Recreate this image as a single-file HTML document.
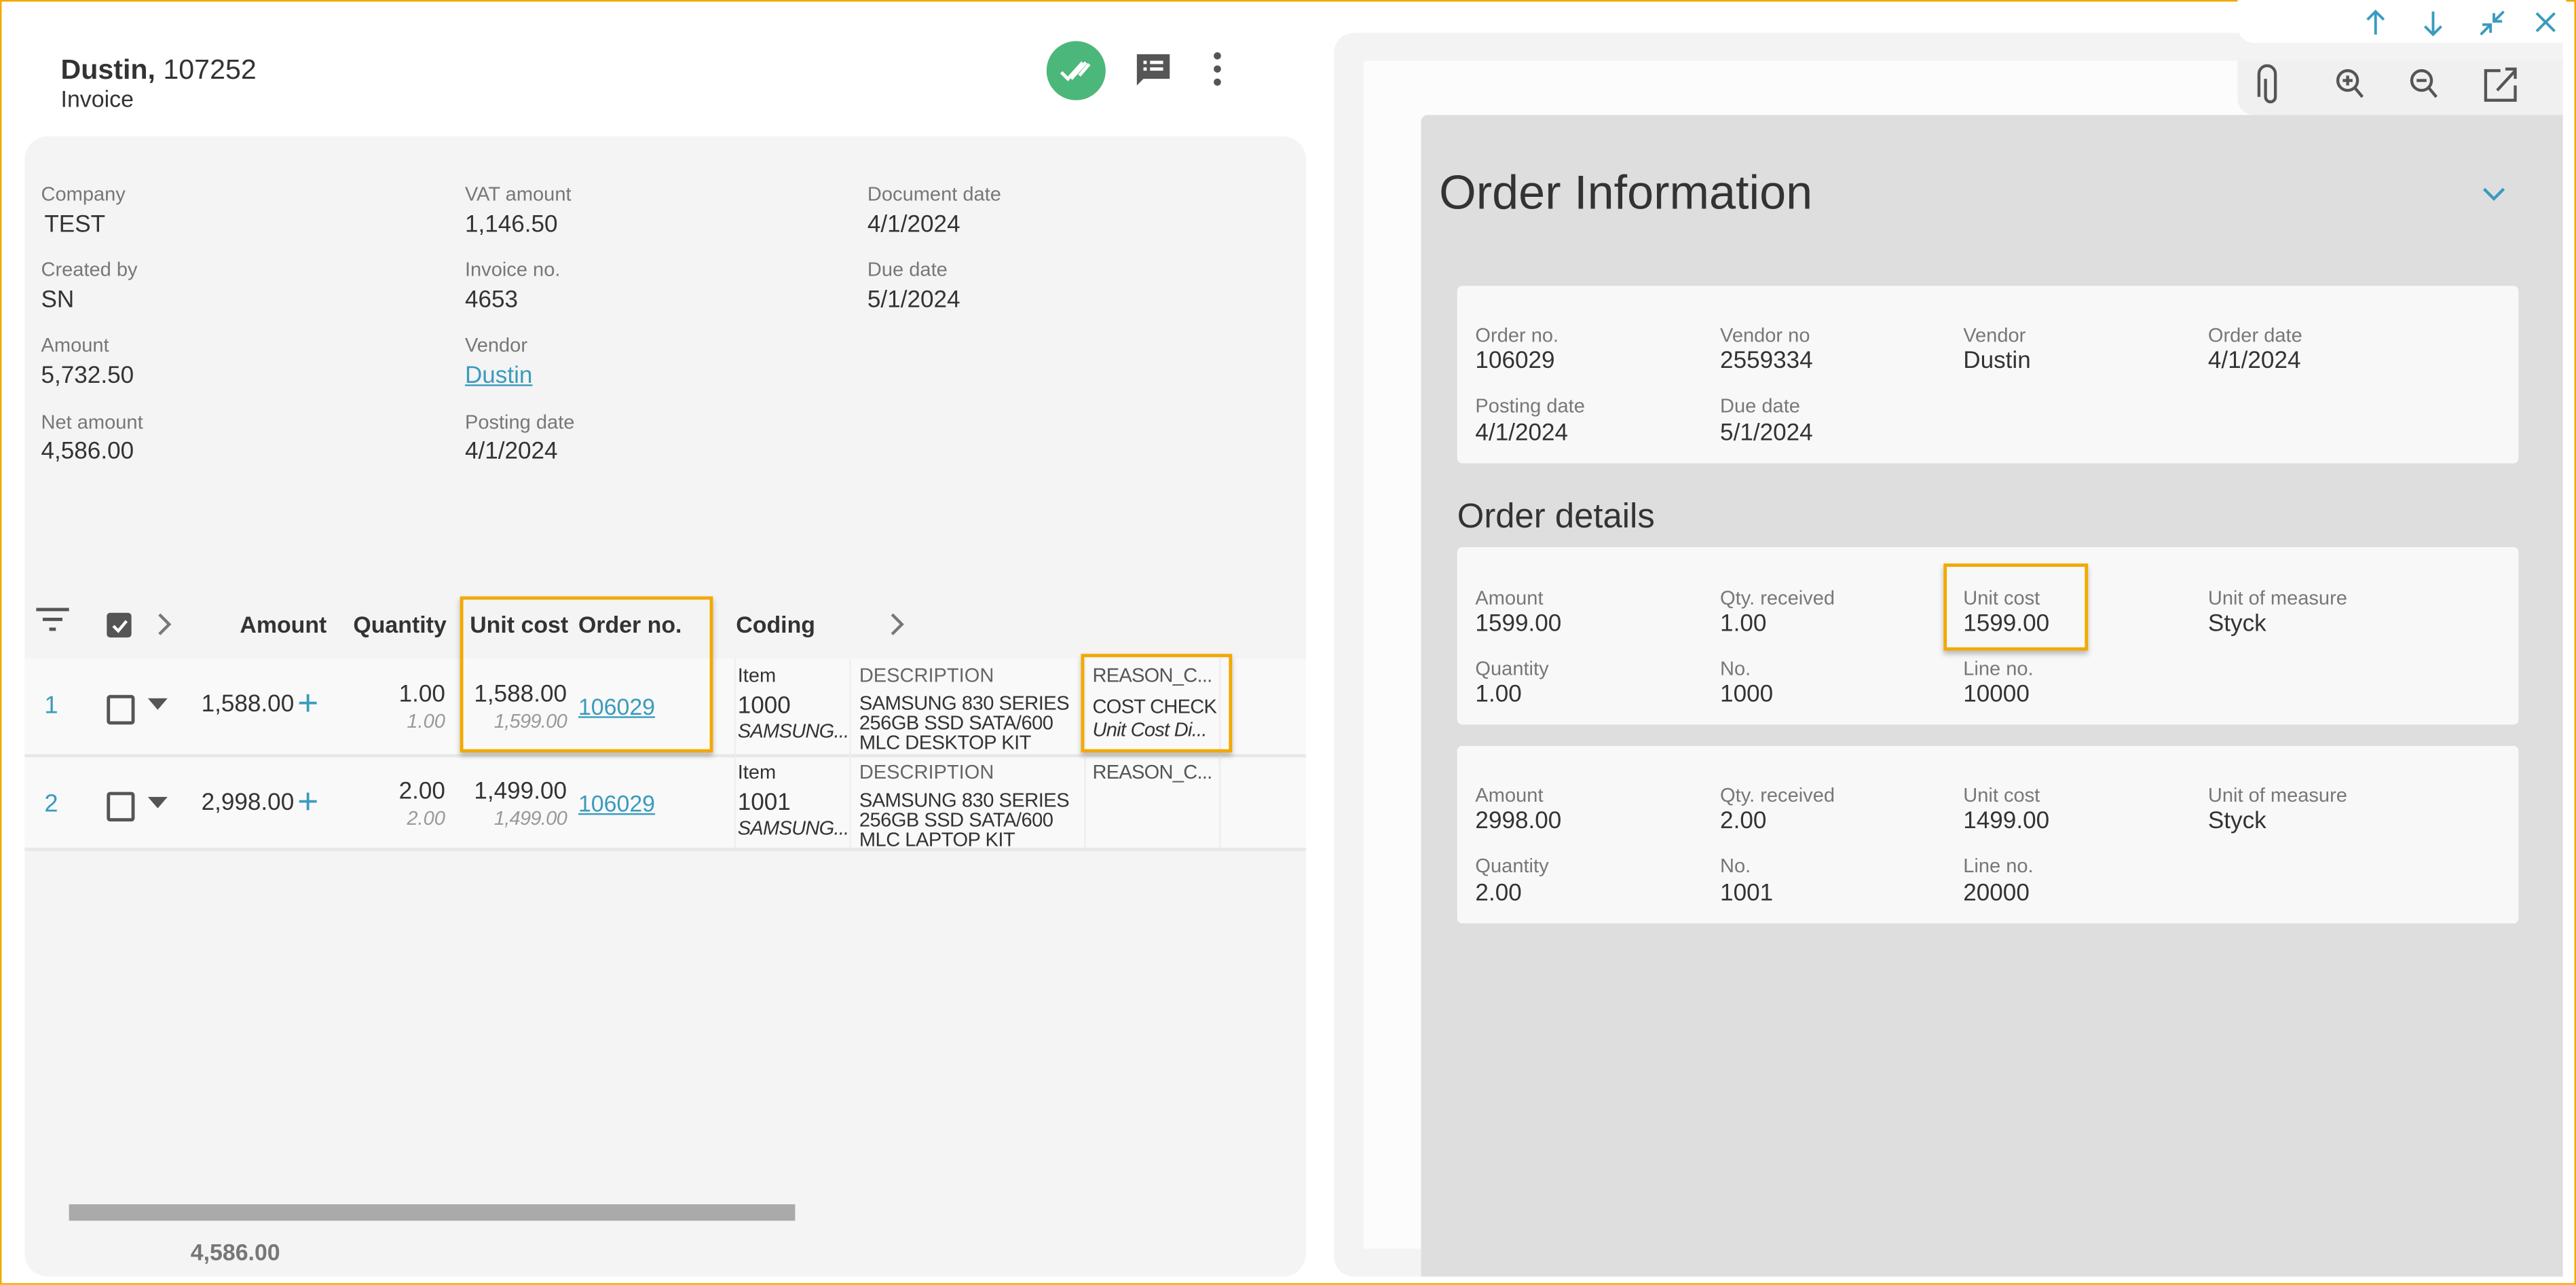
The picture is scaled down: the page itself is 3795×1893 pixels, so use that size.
<!DOCTYPE html>
<html><head><meta charset="utf-8"><style>
html,body{margin:0;padding:0;width:3795px;height:1893px;overflow:hidden;background:#fff}
#s{position:absolute;left:0;top:0;width:1568px;height:782px;transform:scale(2.4203);transform-origin:0 0;font-family:"Liberation Sans",sans-serif;color:#333}
.a{position:absolute;white-space:nowrap}
.l{font-size:12px;color:#777}
.v{font-size:14.5px;color:#333}
.h{font-size:14px;font-weight:bold;color:#333}
.ob{position:absolute;border:2px solid #f2a900;box-shadow:0 2px 3px rgba(0,0,0,.25)}
.card{position:absolute;left:887px;width:646px;height:108px;background:#f8f8f8;border-radius:3px}
.lnk{color:#3a9bbd;text-decoration:underline}
.r{text-align:right}
</style></head><body><div id="s">
<div class="a" style="left:0;top:0;width:1566px;height:780px;border:1px solid #f2a900"></div>
<div class="a" style="left:37px;top:33px;font-size:17px"><b>Dustin,</b> 107252</div>
<div class="a" style="left:37px;top:52px;font-size:14px">Invoice</div>
<svg class="a" style="left:637px;top:25px" width="36" height="36"><circle cx="18" cy="18" r="18" fill="#4cb77a"/><path d="M9 19l4 4 9-10M15 23l9-10M20 21l6-7" stroke="#fff" stroke-width="2" fill="none"/></svg>
<svg class="a" style="left:690px;top:31px" width="24" height="24"><path d="M2 2h20v15H6l-4 4z" fill="#555"/><path d="M6 6h2v2H6zM10 6h8v2h-8zM6 10h2v2H6zM10 10h8v2h-8z" fill="#fff"/></svg>
<svg class="a" style="left:735px;top:31px" width="12" height="22"><circle cx="6" cy="3" r="2.2" fill="#555"/><circle cx="6" cy="11" r="2.2" fill="#555"/><circle cx="6" cy="19" r="2.2" fill="#555"/></svg>

<div class="a" style="left:15px;top:83px;width:780px;height:694px;background:#f4f4f4;border-radius:14px"></div>
<div class="a l" style="left:25px;top:111px">Company</div><div class="a v" style="left:27px;top:129px">TEST</div>
<div class="a l" style="left:25px;top:157px">Created by</div><div class="a v" style="left:25px;top:175px">SN</div>
<div class="a l" style="left:25px;top:203px">Amount</div><div class="a v" style="left:25px;top:221px">5,732.50</div>
<div class="a l" style="left:25px;top:250px">Net amount</div><div class="a v" style="left:25px;top:267px">4,586.00</div>
<div class="a l" style="left:283px;top:111px">VAT amount</div><div class="a v" style="left:283px;top:129px">1,146.50</div>
<div class="a l" style="left:283px;top:157px">Invoice no.</div><div class="a v" style="left:283px;top:175px">4653</div>
<div class="a l" style="left:283px;top:203px">Vendor</div><div class="a v lnk" style="left:283px;top:221px">Dustin</div>
<div class="a l" style="left:283px;top:250px">Posting date</div><div class="a v" style="left:283px;top:267px">4/1/2024</div>
<div class="a l" style="left:528px;top:111px">Document date</div><div class="a v" style="left:528px;top:129px">4/1/2024</div>
<div class="a l" style="left:528px;top:157px">Due date</div><div class="a v" style="left:528px;top:175px">5/1/2024</div>

<svg class="a" style="left:22px;top:370px" width="22" height="16"><path d="M0 1h20M4 7h12M8 13h4" stroke="#555" stroke-width="2"/></svg>
<div class="a" style="left:65px;top:373px;width:15px;height:15px;background:#555;border-radius:2px"></div>
<svg class="a" style="left:66px;top:374px" width="14" height="14"><path d="M3 7l3 3 5-6" stroke="#fff" stroke-width="1.8" fill="none"/></svg>
<svg class="a" style="left:95px;top:372px" width="10" height="16"><path d="M2 2l6 6-6 6" stroke="#777" stroke-width="1.8" fill="none"/></svg>
<div class="a h" style="left:146px;top:372px">Amount</div>
<div class="a h" style="left:215px;top:372px">Quantity</div>
<div class="a h" style="left:286px;top:372px">Unit cost</div>
<div class="a h" style="left:352px;top:372px">Order no.</div>
<div class="a h" style="left:448px;top:372px">Coding</div>
<svg class="a" style="left:541px;top:372px" width="10" height="16"><path d="M2 2l6 6-6 6" stroke="#777" stroke-width="1.8" fill="none"/></svg>

<div class="a" style="left:15px;top:401px;width:780px;height:58px;background:#f9f9f9;border-bottom:2px solid #e8e8e8"></div>
<div class="a" style="left:15px;top:461px;width:780px;height:55px;background:#f9f9f9;border-bottom:2px solid #e8e8e8"></div>
<div class="a" style="left:447px;top:401px;width:1px;height:115px;background:#eee"></div>
<div class="a" style="left:517px;top:401px;width:1px;height:115px;background:#eee"></div>
<div class="a" style="left:660px;top:401px;width:1px;height:115px;background:#eee"></div>
<div class="a" style="left:742px;top:401px;width:1px;height:115px;background:#eee"></div>

<div class="a" style="left:27px;top:421px;font-size:15px;color:#3a9bbd">1</div>
<div class="a" style="left:65px;top:423px;width:13px;height:14px;border:2px solid #555;border-radius:2px"></div>
<svg class="a" style="left:90px;top:425px" width="12" height="8"><path d="M0 0h12L6 7z" fill="#555"/></svg>
<div class="a v r" style="left:100px;width:79px;top:421px">1,588.00</div>
<div class="a" style="left:181px;top:417px;font-size:22px;color:#3a9bbd;line-height:22px">+</div>
<div class="a v r" style="left:220px;width:51px;top:415px">1.00</div>
<div class="a r" style="left:220px;width:51px;top:432px;font-size:12px;color:#999;font-style:italic">1.00</div>
<div class="a v r" style="left:270px;width:75px;top:415px">1,588.00</div>
<div class="a r" style="left:270px;width:75px;top:432px;font-size:12px;color:#999;font-style:italic;letter-spacing:-0.3px">1,599.00</div>
<div class="a lnk" style="left:352px;top:422px;font-size:14px">106029</div>
<div class="a" style="left:449px;top:404px;font-size:12px">Item</div>
<div class="a v" style="left:449px;top:422px">1000</div>
<div class="a" style="left:449px;top:438px;font-size:12px;font-style:italic;letter-spacing:-0.3px">SAMSUNG...</div>
<div class="a" style="left:523px;top:404px;font-size:12px;color:#666">DESCRIPTION</div>
<div class="a" style="left:523px;top:422px;font-size:12px;line-height:12px;height:35px;overflow:hidden;letter-spacing:-0.2px">SAMSUNG 830 SERIES<br>256GB SSD SATA/600<br>MLC DESKTOP KIT</div>
<div class="a" style="left:665px;top:404px;font-size:12px;color:#555;letter-spacing:-0.3px">REASON_C...</div>
<div class="a" style="left:665px;top:423px;font-size:12px;letter-spacing:-0.3px">COST CHECK</div>
<div class="a" style="left:665px;top:437px;font-size:12px;font-style:italic;letter-spacing:-0.3px">Unit Cost Di...</div>

<div class="a" style="left:27px;top:481px;font-size:15px;color:#3a9bbd">2</div>
<div class="a" style="left:65px;top:482px;width:13px;height:14px;border:2px solid #555;border-radius:2px"></div>
<svg class="a" style="left:90px;top:485px" width="12" height="8"><path d="M0 0h12L6 7z" fill="#555"/></svg>
<div class="a v r" style="left:100px;width:79px;top:481px">2,998.00</div>
<div class="a" style="left:181px;top:477px;font-size:22px;color:#3a9bbd;line-height:22px">+</div>
<div class="a v r" style="left:220px;width:51px;top:474px">2.00</div>
<div class="a r" style="left:220px;width:51px;top:491px;font-size:12px;color:#999;font-style:italic">2.00</div>
<div class="a v r" style="left:270px;width:75px;top:474px">1,499.00</div>
<div class="a r" style="left:270px;width:75px;top:491px;font-size:12px;color:#999;font-style:italic;letter-spacing:-0.3px">1,499.00</div>
<div class="a lnk" style="left:352px;top:481px;font-size:14px">106029</div>
<div class="a" style="left:449px;top:463px;font-size:12px">Item</div>
<div class="a v" style="left:449px;top:481px">1001</div>
<div class="a" style="left:449px;top:497px;font-size:12px;font-style:italic;letter-spacing:-0.3px">SAMSUNG...</div>
<div class="a" style="left:523px;top:463px;font-size:12px;color:#666">DESCRIPTION</div>
<div class="a" style="left:523px;top:481px;font-size:12px;line-height:12px;height:35px;overflow:hidden;letter-spacing:-0.2px">SAMSUNG 830 SERIES<br>256GB SSD SATA/600<br>MLC LAPTOP KIT</div>
<div class="a" style="left:665px;top:463px;font-size:12px;color:#555;letter-spacing:-0.3px">REASON_C...</div>

<div class="ob" style="left:280px;top:363px;width:150px;height:91px"></div>
<div class="ob" style="left:658px;top:398px;width:88px;height:56px"></div>

<div class="a" style="left:42px;top:733px;width:442px;height:10px;background:#aaa"></div>
<div class="a" style="left:116px;top:754px;font-size:14px;font-weight:bold;color:#777">4,586.00</div>

<!-- right -->
<div class="a" style="left:812px;top:20px;width:748px;height:757px;background:#f3f3f3;border-radius:12px 0 0 12px"></div>
<div class="a" style="left:1362px;top:0;width:200px;height:26px;background:#fff;border-radius:0 0 0 10px"></div>
<div class="a" style="left:830px;top:37px;width:730px;height:723px;background:#fcfcfc"></div>
<div class="a" style="left:1362px;top:37px;width:198px;height:33px;background:#f0f0f0;border-radius:0 0 0 10px"></div>
<svg class="a" style="left:1438px;top:5px" width="124" height="18" fill="none" stroke="#3a9bbd" stroke-width="1.6"><path d="M8 16V2M3 7l5-5 5 5M43 2v14M38 11l5 5 5-5M72 16l6-6M73 10h5v5M86 2l-6 6M80 3v5h5M106 3l11 11M117 3L106 14"/></svg>
<svg class="a" style="left:1370px;top:38px" width="165" height="28" fill="none" stroke="#555" stroke-width="1.8"><path d="M9 10v11a3 3 0 0 0 6 0V7a5 5 0 0 0-10 0v14"/><circle cx="59" cy="11" r="6"/><path d="M63 15l5 6M56 11h6M59 8v6"/><circle cx="104" cy="11" r="6"/><path d="M108 15l5 6M101 11h6"/><path d="M152 5h-9v18h18v-9M150 17l11-12M155 4h6v6"/></svg>

<div class="a" style="left:865px;top:70px;width:695px;height:707px;background:#dedede;border-radius:4px 0 0 0"></div>
<div class="a" style="left:876px;top:102px;font-size:29px;font-weight:300;color:#333">Order Information</div>
<svg class="a" style="left:1511px;top:113px" width="14" height="10"><path d="M1 2l6 6 6-6" stroke="#3a9bbd" stroke-width="1.8" fill="none"/></svg>

<div class="card" style="top:174px"></div>
<div class="a l" style="left:898px;top:197px">Order no.</div><div class="a v" style="left:898px;top:212px">106029</div>
<div class="a l" style="left:1047px;top:197px">Vendor no</div><div class="a v" style="left:1047px;top:212px">2559334</div>
<div class="a l" style="left:1195px;top:197px">Vendor</div><div class="a v" style="left:1195px;top:212px">Dustin</div>
<div class="a l" style="left:1344px;top:197px">Order date</div><div class="a v" style="left:1344px;top:212px">4/1/2024</div>
<div class="a l" style="left:898px;top:240px">Posting date</div><div class="a v" style="left:898px;top:256px">4/1/2024</div>
<div class="a l" style="left:1047px;top:240px">Due date</div><div class="a v" style="left:1047px;top:256px">5/1/2024</div>

<div class="a" style="left:887px;top:303px;font-size:21px;font-weight:300;color:#333">Order details</div>

<div class="card" style="top:333px"></div>
<div class="a l" style="left:898px;top:357px">Amount</div><div class="a v" style="left:898px;top:372px">1599.00</div>
<div class="a l" style="left:1047px;top:357px">Qty. received</div><div class="a v" style="left:1047px;top:372px">1.00</div>
<div class="a l" style="left:1195px;top:357px">Unit cost</div><div class="a v" style="left:1195px;top:372px">1599.00</div>
<div class="a l" style="left:1344px;top:357px">Unit of measure</div><div class="a v" style="left:1344px;top:372px">Styck</div>
<div class="a l" style="left:898px;top:400px">Quantity</div><div class="a v" style="left:898px;top:415px">1.00</div>
<div class="a l" style="left:1047px;top:400px">No.</div><div class="a v" style="left:1047px;top:415px">1000</div>
<div class="a l" style="left:1195px;top:400px">Line no.</div><div class="a v" style="left:1195px;top:415px">10000</div>
<div class="ob" style="left:1183px;top:343px;width:84px;height:49px"></div>

<div class="card" style="top:454px"></div>
<div class="a l" style="left:898px;top:477px">Amount</div><div class="a v" style="left:898px;top:492px">2998.00</div>
<div class="a l" style="left:1047px;top:477px">Qty. received</div><div class="a v" style="left:1047px;top:492px">2.00</div>
<div class="a l" style="left:1195px;top:477px">Unit cost</div><div class="a v" style="left:1195px;top:492px">1499.00</div>
<div class="a l" style="left:1344px;top:477px">Unit of measure</div><div class="a v" style="left:1344px;top:492px">Styck</div>
<div class="a l" style="left:898px;top:520px">Quantity</div><div class="a v" style="left:898px;top:536px">2.00</div>
<div class="a l" style="left:1047px;top:520px">No.</div><div class="a v" style="left:1047px;top:536px">1001</div>
<div class="a l" style="left:1195px;top:520px">Line no.</div><div class="a v" style="left:1195px;top:536px">20000</div>
</div></body></html>
